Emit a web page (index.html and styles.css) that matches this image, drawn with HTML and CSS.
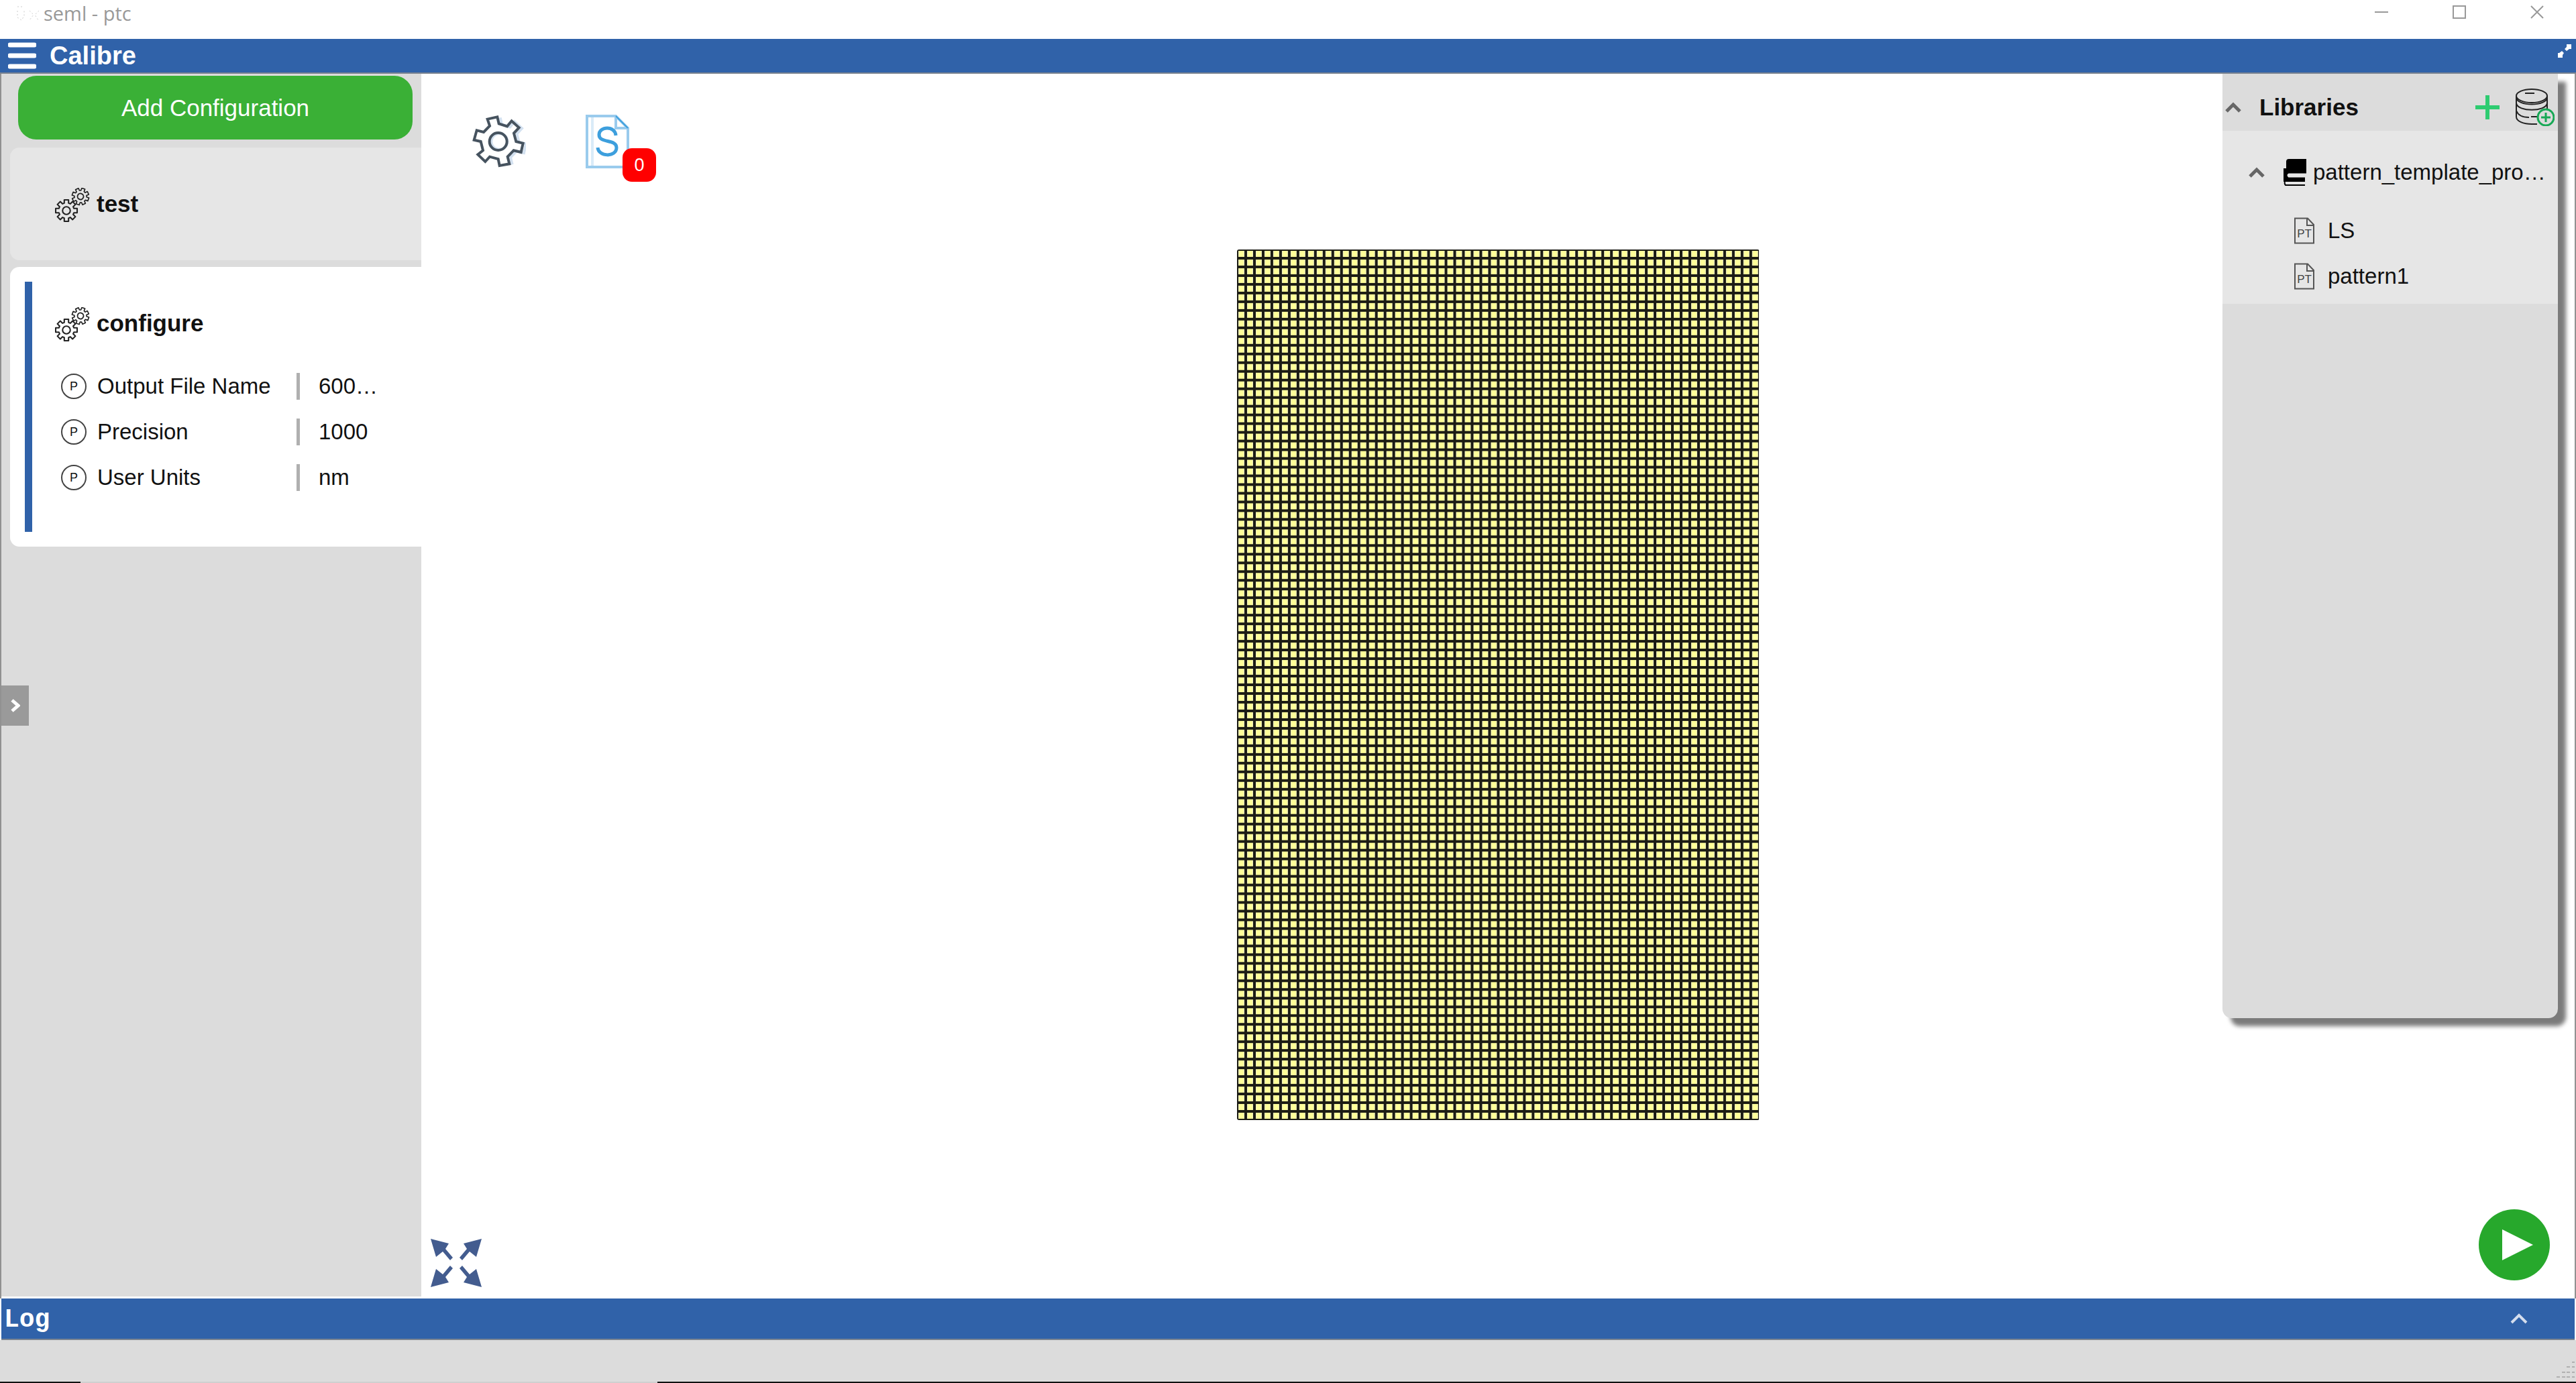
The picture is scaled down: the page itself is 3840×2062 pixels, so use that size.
FILE: index.html
```html
<!DOCTYPE html>
<html lang="en">
<head>
<meta charset="utf-8">
<title>seml - ptc</title>
<link rel="stylesheet" href="styles.css">
</head>
<body>
<svg class="defs" aria-hidden="true">
  <symbol id="gears" viewBox="0 0 52 52">
    <g fill="none" stroke="#222">
      <g transform="translate(17 34) scale(1.6)"><path id="cog" stroke-width="1.3" stroke-linejoin="round" d="M-2-10H2V-7L3.6-6.3L5.7-8.4L8.4-5.7L6.3-3.6L7-2H10V2H7L6.3 3.6L8.4 5.7L5.7 8.4L3.6 6.3L2 7V10H-2V7L-3.6 6.3L-5.7 8.4L-8.4 5.7L-6.3 3.6L-7 2H-10V-2H-7L-6.3-3.6L-8.4-5.7L-5.7-8.4L-3.6-6.3L-2-7Z"/><circle r="3.6" stroke-width="1.3"/></g>
      <g transform="translate(38 13) rotate(20) scale(1.25)"><use href="#cog"/><circle r="3.6" stroke-width="1.5"/></g>
    </g>
  </symbol>
  <symbol id="doc-sheet" viewBox="0 0 30 40">
    <path d="M1 1.500H20L29 11V38.500H1ZM19 1.500V12H29" fill="none" stroke="#555" stroke-width="2"/>
  </symbol>
  <symbol id="chevron-up" viewBox="0 0 24 16"><path d="M2 14 12 4 22 14" fill="none" stroke="currentColor" stroke-width="5"/></symbol>
</svg>

<header class="titlebar">
  <svg class="app-mark" viewBox="0 0 34 24" aria-hidden="true"><path d="M2 2H12M2 8V18L8 22L12 16V8M20 8L26 14L20 22M34 8L28 14L33 22" fill="none" stroke="#ccc" stroke-width="1" stroke-dasharray="2 3"/></svg>
  <span class="window-name">seml - ptc</span>
  <div class="window-controls">
    <button type="button" aria-label="Minimize"><svg viewBox="0 0 20 20"><path d="M0 10H20"/></svg></button>
    <button type="button" aria-label="Maximize"><svg viewBox="0 0 20 20"><path d="M1 1H19V19H1Z"/></svg></button>
    <button type="button" aria-label="Close"><svg viewBox="0 0 20 20"><path d="M1 1 19 19M19 1 1 19"/></svg></button>
  </div>
</header>

<nav class="menubar">
  <button type="button" class="menu-button" aria-label="Menu"><svg viewBox="0 0 42 40"><path d="M3 4H39M3 20H39M3 36H39" stroke="#fff" stroke-width="7" stroke-linecap="round"/></svg></button>
  <span class="brand">Calibre</span>
  <button type="button" class="fullscreen" aria-label="Full screen"><svg viewBox="0 0 22 22"><path d="M14 1H21V8H18L14 11L11 8L14 5ZM1 14H3L7 11L10 14L8 17V21H1Z" fill="#fff"/></svg></button>
</nav>

<main class="workspace">
  <aside class="sidebar">
    <button type="button" class="add-config">Add Configuration</button>
    <section class="card">
      <h2 class="card-title"><svg class="gears"><use href="#gears"/></svg><span>test</span></h2>
    </section>
    <section class="card active">
      <div class="card-body">
        <h2 class="card-title"><svg class="gears"><use href="#gears"/></svg><span>configure</span></h2>
        <dl class="params">
          <div class="param"><span class="p-mark">P</span><dt>Output File Name</dt><dd>600…</dd></div>
          <div class="param"><span class="p-mark">P</span><dt>Precision</dt><dd>1000</dd></div>
          <div class="param"><span class="p-mark">P</span><dt>User Units</dt><dd>nm</dd></div>
        </dl>
      </div>
    </section>
    <button type="button" class="drawer" aria-label="Open drawer"><svg viewBox="0 0 14 20"><path d="M2 2 11 10 2 18" fill="none" stroke="#fff" stroke-width="5"/></svg></button>
  </aside>

  <section class="canvas">
    <svg class="layout-grid" viewBox="0 0 780 1300" role="img" aria-label="Layout pattern">
      <defs><pattern id="cell" width="13" height="13" patternUnits="userSpaceOnUse">
        <rect width="13" height="13" fill="#1c1c14"/><rect x="2" y="2" width="9" height="9" fill="#f2f2c4"/><rect x="3" y="2" width="7" height="9" fill="#ffff99"/>
      </pattern></defs>
      <rect width="780" height="1300" rx="3" fill="url(#cell)"/>
    </svg>

    <div class="tools">
      <button type="button" aria-label="Settings">
        <svg class="tool-gear" viewBox="312 242 240 240">
          <g fill="none" stroke-width="12">
            <g stroke="#d3e1f0" transform="translate(13 3)"><path d="M424 252L431 282L468 294L488 270L521 300L498 325L508 362L539 370L530 410L497 402L470 430L478 462"/><circle cx="420" cy="359" r="36"/></g>
            <path stroke="#46535f" d="M380 262L424 252L431 282L468 294L488 270L521 300L498 325L508 362L539 370L530 410L497 402L470 430L478 462L434 470L428 440L390 430L370 452L337 420L360 402L350 362L320 355L332 312L363 320L390 292Z"/>
            <circle stroke="#46535f" cx="428" cy="362" r="39"/>
          </g>
        </svg>
      </button>
      <button type="button" class="script-tool" aria-label="Scripts">
        <svg class="tool-doc" viewBox="0 0 66 80">
          <path d="M10 4V76" stroke="#d9ebf8" stroke-width="4"/>
          <path d="M2 2H45L63 20V78H2ZM45 2V20H63" fill="none" stroke="#9acbed" stroke-width="4"/>
          <path d="M45 2 63 20" stroke="#3d9fdd" stroke-width="2"/>
          <path d="M45 31C44 16 20 17 20 30C20 43 46 36 46 49C46 64 19 63 18 49" fill="none" stroke="#3d9fdd" stroke-width="5"/>
        </svg>
        <span class="badge">0</span>
      </button>
    </div>

    <aside class="libraries">
      <div class="lib-head">
        <svg class="chevron"><use href="#chevron-up"/></svg>
        <h2>Libraries</h2>
        <button type="button" aria-label="Add library"><svg class="plus" viewBox="0 0 36 36"><path d="M0 18H36M18 0V36" stroke="#2ecc71" stroke-width="6"/></svg></button>
        <button type="button" aria-label="Add database"><svg class="database" viewBox="0 0 58 56">
          <g fill="none" stroke="#222" stroke-width="2"><ellipse cx="24" cy="11" rx="23" ry="10"/><path d="M1 11V42C1 49 12 53 24 53H32M47 11V30M1 13C1 27 47 27 47 13M1 22C3 35 45 35 47 22M1 33C4 41 13 43 20 43M23 42H32"/><path d="M14 7H28"/></g>
          <circle cx="45" cy="43" r="12" fill="#dcdcdc" stroke="#17a855" stroke-width="3"/><path d="M38 43H52M45 36V50" stroke="#17a855" stroke-width="3"/></svg></button>
      </div>
      <div class="tree">
        <div class="tree-root">
          <svg class="chevron"><use href="#chevron-up"/></svg>
          <svg class="book" viewBox="0 0 34 40"><path d="M8 0H34V24H8Q6 24 6 26H32V34H0V14H4V4Q4 0 8 0Z"/><path d="M32 26H8Q6 24 8 23H34" fill="none" stroke="#e6e6e6" stroke-width="3"/><path d="M32 39H3Q1 37 2 34" fill="none" stroke="#000" stroke-width="2"/></svg>
          <span>pattern_template_pro…</span>
        </div>
        <ul>
          <li><svg class="doc" viewBox="0 0 30 40"><use href="#doc-sheet"/><text x="15" y="30" text-anchor="middle">PT</text></svg>LS</li>
          <li><svg class="doc" viewBox="0 0 30 40"><use href="#doc-sheet"/><text x="15" y="30" text-anchor="middle">PT</text></svg>pattern1</li>
        </ul>
      </div>
    </aside>

    <button type="button" class="fit" aria-label="Fit to view"><svg viewBox="0 0 76 72">
      <g id="arrows-l" fill="#435c8f"><path d="M0 0 27 7 22 15 33 28 29 32 18 19 8 27Z"/><path d="M0 72 27 65 22 57 33 44 29 40 18 53 8 45Z"/></g>
      <use href="#arrows-l" transform="translate(76 0) scale(-1 1)"/></svg></button>
    <button type="button" class="run" aria-label="Run"><svg viewBox="0 0 106 106"><circle cx="53" cy="53" r="53" fill="#27a82c"/><path d="M35 30 81 53 35 76Z" fill="#fff"/></svg></button>
  </section>
</main>

<section class="log">
  <h2>Log</h2>
  <button type="button" aria-label="Expand log"><svg viewBox="0 0 26 16"><path d="M2 14 13 3 24 14" fill="none" stroke="#d5deee" stroke-width="4"/></svg></button>
</section>

<footer class="status">
  <svg class="grip" viewBox="0 0 28 28" aria-hidden="true"><path d="M24 3h5M16 10h5M24 10h5M9 18h5M16 18h5M24 18h5M1 25h5M9 25h5M16 25h5M24 25h5" stroke="#b0b0b0" stroke-width="2"/></svg>
</footer>
<div class="edge"><span></span></div>
</body>
</html>
```

FILE: styles.css
```css
* { box-sizing: border-box; }

body {
  margin: 0;
  height: 100vh;
  display: flex;
  flex-direction: column;
  background: #fff;
  color: #111;
  font: 33px/40px "Liberation Sans", Arial, sans-serif;
}

h2, dl, dd, ul { margin: 0; padding: 0; }
h2 { font-size: 35px; }
button { margin: 0; padding: 0; border: 0; background: none; font: inherit; color: inherit; }
svg { display: block; }
.defs { position: absolute; width: 0; height: 0; }

/* Window title bar */
.titlebar { flex: 0 0 58px; display: flex; align-items: flex-start; padding: 0 48px 0 24px; }
.app-mark { width: 34px; height: 24px; margin-top: 8px; }
.window-name { margin-left: 7px; color: #999; font: 29px/40px "Open Sans", sans-serif; }
.window-controls { margin-left: auto; padding-top: 8px; display: flex; gap: 96px; }
.window-controls svg { width: 20px; height: 20px; fill: none; stroke: #999; stroke-width: 2; }

/* Blue menu bar */
.menubar {
  flex: 0 0 52px;
  display: flex;
  align-items: center;
  padding: 0 6px 0 12px;
  background: #3062a9;
  border-bottom: 2px solid #7b8490;
}
.menu-button svg { width: 42px; height: 40px; }
.brand { margin-left: 20px; color: #fff; font-size: 38px; font-weight: bold; }
.fullscreen { margin-left: auto; padding-bottom: 14px; }
.fullscreen svg { width: 22px; height: 22px; }

/* Work area */
.workspace {
  flex: 1;
  min-height: 0;
  display: flex;
  border-left: 2px solid #919191;
  border-right: 2px solid #919191;
}

.sidebar {
  position: relative;
  flex: 0 0 626px;
  margin-bottom: 3px;
  padding: 3px 0 0 13px;
  display: flex;
  flex-direction: column;
  background: #dcdcdc;
}
.add-config {
  height: 95px;
  margin: 0 13px 12px 12px;
  border-radius: 27px;
  background: #3ab036;
  color: #fff;
  font-size: 35px;
}
.card {
  min-height: 168px;
  margin-bottom: 10px;
  padding: 60px 0 0 67px;
  border-radius: 14px 0 0 14px;
  background: #e6e6e6;
}
.card.active { padding: 22px 0 22px 22px; background: #fff; }
.card-body { height: 373px; padding: 38px 0 0 34px; border-left: 11px solid #3062a9; }
.card-title { display: flex; align-items: center; gap: 10px; line-height: 48px; }
.card-title span { padding-bottom: 4px; }
.gears { width: 52px; height: 52px; }
.params { padding: 32px 0 0 9px; }
.param { display: flex; align-items: center; height: 68px; }
.p-mark {
  width: 38px;
  height: 38px;
  border: 2px solid #444;
  border-radius: 50%;
  font-size: 18px;
  line-height: 34px;
  text-align: center;
}
dt { width: 297px; margin-left: 16px; }
dd { padding-left: 28px; border-left: 5px solid #b0b0b0; }
.drawer {
  position: absolute;
  left: 0;
  top: 50%;
  width: 41px;
  height: 60px;
  display: grid;
  place-items: center;
  background: #9a9a9a;
}
.drawer svg { width: 14px; height: 20px; }

/* Canvas and what floats over it */
.canvas { position: relative; flex: 1; display: flex; align-items: center; justify-content: center; padding-bottom: 4px; }
.layout-grid { height: 1298px; max-height: 80%; aspect-ratio: 3 / 5; }

.tools { position: absolute; left: 76px; top: 61px; display: flex; gap: 89px; }
.tool-gear { width: 80px; height: 80px; }
.script-tool { position: relative; }
.tool-doc { width: 66px; height: 80px; }
.badge {
  position: absolute;
  left: 55px;
  top: 50px;
  width: 50px;
  height: 50px;
  border-radius: 14px;
  background: #f00;
  color: #fff;
  font-size: 27px;
  line-height: 50px;
}

.libraries {
  position: absolute;
  top: 0;
  right: 25px;
  width: 500px;
  height: 1408px;
  border-radius: 0 0 14px 14px;
  background: #dcdcdc;
  box-shadow: 12px 12px 6px #7b7b7b;
}
.lib-head { height: 85px; padding: 15px 5px 0 4px; display: flex; align-items: center; gap: 24px; }
.lib-head h2 { flex: 1; margin-left: 3px; }
.chevron { width: 24px; height: 16px; color: #666; }
.plus { width: 36px; height: 36px; }
.database { width: 58px; height: 56px; }
.tree { height: 258px; padding-top: 42px; background: #e6e6e6; }
.tree-root { display: flex; align-items: center; padding-left: 39px; }
.book { width: 34px; height: 40px; margin: 0 10px 0 28px; }
.tree ul { margin-top: 33px; list-style: none; }
.tree li { display: flex; align-items: center; gap: 20px; height: 68px; padding-left: 107px; }
.doc { width: 30px; height: 40px; fill: #444; font-size: 17px; }

.fit { position: absolute; left: 14px; bottom: 17px; }
.fit svg { width: 76px; height: 72px; }
.run { position: absolute; right: 37px; bottom: 27px; }
.run svg { width: 106px; height: 106px; }

/* Log bar and status bar */
.log {
  flex: 0 0 62px;
  margin: 0 2px;
  padding: 0 70px 0 4px;
  display: flex;
  align-items: center;
  justify-content: space-between;
  background: #3062a9;
  border-bottom: 2px solid #7b8490;
  color: #fff;
}
.log h2 { padding-top: 4px; font: bold 38px/56px "Liberation Mono", monospace; }
.log svg { width: 26px; height: 16px; }
.status { flex: 0 0 62px; display: flex; justify-content: flex-end; align-items: flex-end; padding: 0 2px 4px; background: #dcdcdc; }
.grip { width: 28px; height: 28px; }
.edge { flex: 0 0 2px; padding-left: 120px; background: #111; }
.edge span { display: block; width: 860px; height: 2px; background: #d0d0d0; }
```
